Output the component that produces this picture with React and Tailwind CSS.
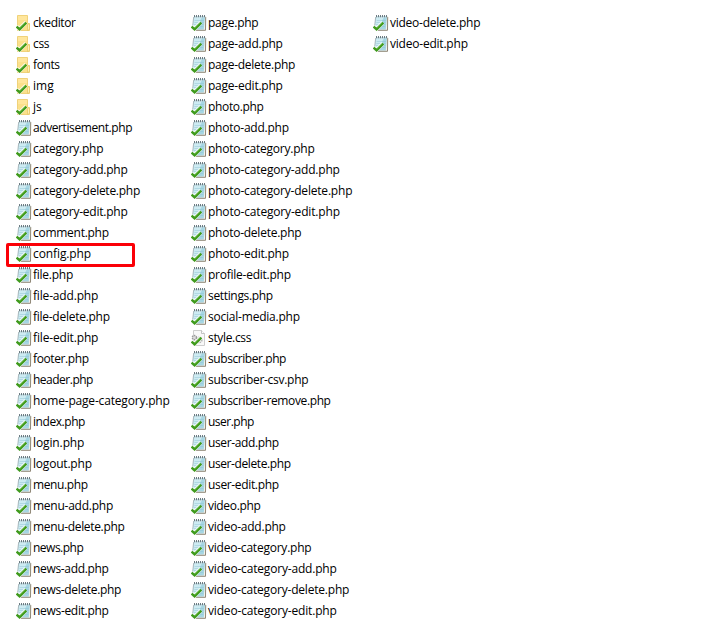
// Each entry is [file name, pixels by which the label is tightened].
const columns = [
  [['ckeditor', 3], ['css', 1], ['fonts', 2], ['img', 0], ['js', 0], ['advertisement.php', 7], ['category.php', 3], ['category-add.php', 4], ['category-delete.php', 5], ['category-edit.php', 4], ['comment.php', 3], ['config.php', 1], ['file.php', 2], ['file-add.php', 2], ['file-delete.php', 4], ['file-edit.php', 2], ['footer.php', 4], ['header.php', 5], ['home-page-category.php', 4], ['index.php', 4], ['login.php', 1], ['logout.php', 2], ['menu.php', 3], ['menu-add.php', 3], ['menu-delete.php', 5], ['news.php', 4], ['news-add.php', 4], ['news-delete.php', 5], ['news-edit.php', 4]],
  [['page.php', 2], ['page-add.php', 3], ['page-delete.php', 4], ['page-edit.php', 3], ['photo.php', 3], ['photo-add.php', 3], ['photo-category.php', 4], ['photo-category-add.php', 4], ['photo-category-delete.php', 5], ['photo-category-edit.php', 4], ['photo-delete.php', 4], ['photo-edit.php', 3], ['profile-edit.php', 4], ['settings.php', 4], ['social-media.php', 3.5], ['style.css', 3], ['subscriber.php', 6], ['subscriber-csv.php', 5], ['subscriber-remove.php', 8], ['user.php', 4], ['user-add.php', 4.5], ['user-delete.php', 6], ['user-edit.php', 4.5], ['video.php', 3], ['video-add.php', 3], ['video-category.php', 4], ['video-category-add.php', 4], ['video-category-delete.php', 5], ['video-category-edit.php', 4]],
  [['video-delete.php', 4], ['video-edit.php', 3]],
];

function Check() {
  return (
    <>
      <path d="M0.6 11.4 L3.6 14 L10 7.4" fill="none" stroke="#fff" strokeOpacity="0.8" strokeWidth="4" />
      <path d="M0.5 11.6 L3.6 14.2 L10.3 7.6" fill="none" stroke="#3f9a1c" strokeWidth="2.5" />
      <path d="M3.8 13.2 L9.6 7.4" fill="none" stroke="#66b83a" strokeWidth="0.7" />
    </>
  );
}

function FolderIcon() {
  return (
    <>
      <path d="M1.5 0.5 H11.5 V8 L13.5 9 V15.5 H1.5 Z" fill="#fbe08b" stroke="#f0d27a" />
      <path d="M11.5 9.5 L13.5 8.5 V14.5 L11.5 15.5 Z" fill="#ffefb5" stroke="#e8c866" strokeWidth="0.8" />
      <path d="M2 1 H11 V5 H2 Z" fill="#ffe69c" />
      <Check />
    </>
  );
}

function NotepadIcon() {
  return (
    <>
      <path d="M3 1.5 H15.2 L15 15.5 H2 Z" fill="#f3f1ea" />
      <path d="M3 1.5 H14 L12.8 14.5 H1.2 Z" fill="#a6d6e3" />
      <path d="M3 2 H11 L5 13 H1.4 Z" fill="#cdebf2" />
      <path d="M3.6 5.5 H12.8 M3.3 7.5 H12.6 M3 9.5 H12.4 M8.5 11.5 H12.2" stroke="#86bfd0" strokeOpacity="0.6" strokeWidth="0.7" />
      <path d="M2.7 2 L1.4 13" fill="none" stroke="#9aabb0" strokeWidth="0.8" />
      <path d="M14.7 2 L14.5 15.3 H5" fill="none" stroke="#8f8877" strokeWidth="1" />
      <path d="M3 1.9 H14.5" stroke="#c3d4da" strokeWidth="1" />
      <path d="M3.5 0 V2.2 M5.5 0 V2.2 M7.5 0 V2.2 M9.5 0 V2.2 M11.5 0 V2.2 M13.5 0 V2.2" stroke="#5d6d75" strokeWidth="0.9" />
      <Check />
    </>
  );
}

function StyleIcon() {
  return (
    <>
      <path d="M2.5 0.5 H10.5 L13.5 3.5 V15.5 H2.5 Z" fill="#f8f8f8" stroke="#cdcdcd" />
      <path d="M10.5 0.5 V3.5 H13.5" fill="#fff" stroke="#b4b4b4" strokeWidth="0.8" />
      <circle cx="8.2" cy="10" r="2.6" fill="none" stroke="#b5b5b5" strokeWidth="1.6" strokeDasharray="1.4 0.8" />
      <circle cx="3.4" cy="7.6" r="2.1" fill="#ddd" stroke="#999" strokeWidth="1.4" strokeDasharray="1.4 0.7" />
      <Check />
    </>
  );
}

function FileRow({ name, tighten }) {
  const Icon = !name.includes('.') ? FolderIcon : name.endsWith('.css') ? StyleIcon : NotepadIcon;
  return (
    <li className="relative flex h-[21px] items-start whitespace-nowrap">
      <svg viewBox="0 0 16 16" className="mt-[3px] h-4 w-4 shrink-0">
        <Icon />
      </svg>
      <span className="ml-px leading-[21px]" style={{ letterSpacing: `${-tighten / name.length}px` }}>{name}</span>
      {name === 'config.php' && (
        <span className="absolute -left-2.5 top-0 h-6 w-[129px] rounded-[2px] border-3 border-[#fb0007]" />
      )}
    </li>
  );
}

function Column({ files, className }) {
  return (
    <ul className={className}>
      {files.map(([name, tighten]) => <FileRow key={name} name={name} tighten={tighten} />)}
    </ul>
  );
}

export default function App() {
  return (
    <main className="flex h-[638px] w-[702px] items-start overflow-hidden bg-white pl-4 pt-3 font-['Open_Sans','Noto_Sans',sans-serif] text-[12px] text-black">
      <Column files={columns[0]} className="w-[175px] shrink-0" />
      <Column files={columns[1]} className="w-[182px] shrink-0" />
      <Column files={columns[2]} className="shrink-0" />
    </main>
  );
}
